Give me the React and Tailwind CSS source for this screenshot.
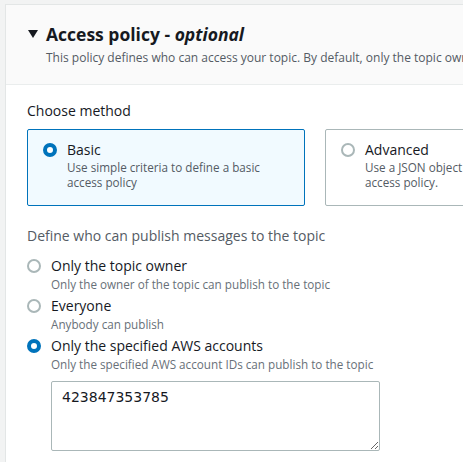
import React, { useState } from 'react';

function Radio({ checked }) {
    return checked ? (
        <span className="block w-[14px] h-[14px] rounded-full border-[4px] border-[#0073bb] bg-white shrink-0" />
    ) : (
        <span className="block w-[14px] h-[14px] rounded-full border-2 border-[#aab7b8] bg-white shrink-0" />
    );
}

const options = [
    { id: 'owner', label: 'Only the topic owner', desc: 'Only the owner of the topic can publish to the topic' },
    { id: 'everyone', label: 'Everyone', desc: 'Anybody can publish' },
    { id: 'accounts', label: 'Only the specified AWS accounts', desc: 'Only the specified AWS account IDs can publish to the topic' },
];

export default function App() {
    const [method, setMethod] = useState('basic');
    const [publisher, setPublisher] = useState('accounts');
    const [accounts, setAccounts] = useState('423847353785');

    return (
        <div className="min-h-screen bg-[#f2f3f3] pt-[4px] pl-[5px] overflow-hidden text-[#16191f]" style={{ fontFamily: '"Open Sans", "Noto Sans", sans-serif' }}>
            <div className="bg-white border-l border-t border-[#e3e6e6] min-h-[458px] w-[600px]">
                {/* Header */}
                <div className="bg-[#fafafa] border-b border-[#eaeded] pl-[22px] pt-[17px] pb-[18px]">
                    <div className="flex items-center gap-[8px]">
                        <svg width="10" height="8" viewBox="0 0 10 8" className="shrink-0">
                            <path d="M0 0h10L5 8z" fill="#16191f" />
                        </svg>
                        <h2 className="text-[17.5px] font-bold leading-[24px] whitespace-nowrap">
                            Access policy - <i className="font-bold">optional</i>
                        </h2>
                    </div>
                    <p className="mt-[4px] pl-[18px] text-[12px] leading-[16px] text-[#545b64] whitespace-nowrap">
                        This policy defines who can access your topic. By default, only the topic owner can publish or subscribe to the topic.
                    </p>
                </div>

                {/* Body */}
                <div className="pl-[21px] pt-[16px]">
                    <p className="text-[14px] leading-[20px]">Choose method</p>
                    <div className="flex gap-[20px] mt-[8px]">
                        <button
                            type="button"
                            onClick={() => setMethod('basic')}
                            className={`w-[280px] h-[77px] text-left rounded-[2px] border pl-[15px] pt-[10px] flex gap-[10px] ${method === 'basic' ? 'bg-[#f1faff] border-[#0073bb]' : 'bg-white border-[#aab7b8]'}`}
                        >
                            <span className="mt-[3px]"><Radio checked={method === 'basic'} /></span>
                            <span>
                                <span className="block text-[14px] leading-[20px]">Basic</span>
                                <span className="block text-[11.7px] leading-[15px] text-[#545b64] w-[210px]">Use simple criteria to define a basic access policy</span>
                            </span>
                        </button>
                        <button
                            type="button"
                            onClick={() => setMethod('advanced')}
                            className={`w-[280px] h-[77px] text-left rounded-[2px] border pl-[15px] pt-[10px] flex gap-[10px] ${method === 'advanced' ? 'bg-[#f1faff] border-[#0073bb]' : 'bg-white border-[#aab7b8]'}`}
                        >
                            <span className="mt-[3px]"><Radio checked={method === 'advanced'} /></span>
                            <span>
                                <span className="block text-[14px] leading-[20px]">Advanced</span>
                                <span className="block text-[11.7px] leading-[15px] text-[#545b64] w-[240px]">Use a JSON object to define an advanced access policy.</span>
                            </span>
                        </button>
                    </div>

                    <p className="mt-[20px] text-[14px] leading-[20px] text-[#545b64]">Define who can publish messages to the topic</p>

                    <div className="mt-[10px] flex flex-col gap-[4px]">
                        {options.map(opt => (
                            <div key={opt.id}>
                                <button type="button" onClick={() => setPublisher(opt.id)} className="flex gap-[10px] text-left">
                                    <span className="mt-[3px]"><Radio checked={publisher === opt.id} /></span>
                                    <span>
                                        <span className="block text-[14px] leading-[20px]">{opt.label}</span>
                                        <span className="block text-[11.7px] leading-[16px] text-[#687078]">{opt.desc}</span>
                                    </span>
                                </button>
                            </div>
                        ))}
                    </div>

                    <textarea
                        value={accounts}
                        onChange={e => setAccounts(e.target.value)}
                        className="block mt-[9px] ml-[24px] w-[329px] h-[70px] border border-[#aab7b8] rounded-[2px] px-[10px] py-[5px] text-[14px] leading-[20px] outline-none"
                        style={{ fontFamily: '"DejaVu Sans", sans-serif' }}
                    />
                </div>
            </div>
        </div>
    );
}
